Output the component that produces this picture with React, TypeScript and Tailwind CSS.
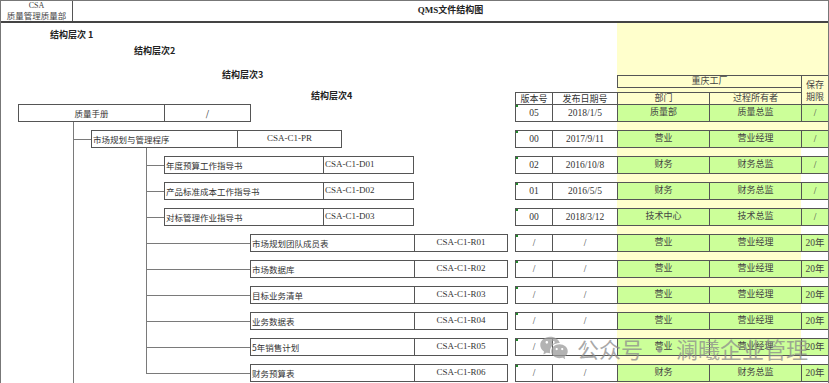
import React from "react";
import { RiWechatFill } from "react-icons/ri";

const serif = "font-['Liberation_Serif','Noto_Sans_CJK_SC',serif]";
const sans = "font-['Noto_Sans_CJK_SC','Liberation_Sans',sans-serif]";

type RowData = { ver: string; date: string; dept: string; owner: string; keep: string };

const rows: RowData[] = [
  { ver: "05", date: "2018/1/5", dept: "质量部", owner: "质量总监", keep: "/" },
  { ver: "00", date: "2017/9/11", dept: "营业", owner: "营业经理", keep: "/" },
  { ver: "02", date: "2016/10/8", dept: "财务", owner: "财务总监", keep: "/" },
  { ver: "01", date: "2016/5/5", dept: "财务", owner: "财务总监", keep: "/" },
  { ver: "00", date: "2018/3/12", dept: "技术中心", owner: "技术总监", keep: "/" },
  { ver: "/", date: "/", dept: "营业", owner: "营业经理", keep: "20年" },
  { ver: "/", date: "/", dept: "营业", owner: "营业经理", keep: "20年" },
  { ver: "/", date: "/", dept: "营业", owner: "营业经理", keep: "20年" },
  { ver: "/", date: "/", dept: "营业", owner: "营业经理", keep: "20年" },
  { ver: "/", date: "/", dept: "营业", owner: "营业经理", keep: "20年" },
  { ver: "/", date: "/", dept: "财务", owner: "财务总监", keep: "20年" },
];

const guides = [
  { name: "年度预算工作指导书", code: "CSA-C1-D01" },
  { name: "产品标准成本工作指导书", code: "CSA-C1-D02" },
  { name: "对标管理作业指导书", code: "CSA-C1-D03" },
];

const records = [
  { name: "市场规划团队成员表", code: "CSA-C1-R01" },
  { name: "市场数据库", code: "CSA-C1-R02" },
  { name: "目标业务清单", code: "CSA-C1-R03" },
  { name: "业务数据表", code: "CSA-C1-R04" },
  { name: "5年销售计划", code: "CSA-C1-R05" },
  { name: "财务预算表", code: "CSA-C1-R06" },
];

// tree connector: vertical line on the left, branch at the box's middle
function Elbow({ className, last }: { className: string; last?: boolean }) {
  return (
    <div className={`flex flex-col h-full ${className}`}>
      <div className="h-[9px] border-l border-[#7a7a7a]" />
      <div className="h-px bg-[#7a7a7a]" />
      {!last && <div className="flex-1 border-l border-[#7a7a7a]" />}
    </div>
  );
}

function Pass() {
  return <div className="w-[73px] h-full border-l border-[#7a7a7a]" />;
}

function TableCells({ d, first }: { d: RowData; first?: boolean }) {
  const cell = "h-[18px] border-y border-l border-[#555] flex items-center justify-center";
  return (
    <div className={`flex h-full text-[9.5px] text-[#333] ${serif}`}>
      <div className={`w-[37px] relative ${cell}`}>
        <span className="absolute left-0 top-0 w-[2px] h-[2px] bg-[#1f8a2a]" />
        {d.ver}
      </div>
      <div className={`w-[65px] ${cell}`}>{d.date}</div>
      <div className="w-[184px] h-full bg-[#ffffcc] flex items-start text-[9px]">
        <div className={`w-[92px] bg-[#ccff99] text-[#444] ${cell}`}>{d.dept}</div>
        <div className={`w-[92px] bg-[#ccff99] text-[#444] ${cell}`}>{d.owner}</div>
      </div>
      <div className={`w-[27px] h-full ${first ? "bg-[#ffffcc]" : "bg-white"}`}>
        <div className={`bg-[#ccff99] text-[#444] ${cell}`}>{d.keep}</div>
      </div>
    </div>
  );
}

export default function App() {
  return (
    <div className="relative w-[829px] h-[383px] overflow-hidden bg-white">
      <div className="w-[829px] h-[383px] border-l border-r border-[#777] flex flex-col">
        {/* title bar */}
        <div className={`flex h-[23px] border-t border-[#777] border-b-2 border-b-[#444] shrink-0 ${serif}`}>
          <div className="w-[72px] border-r border-[#555] flex flex-col items-center text-[8px] leading-[10px] text-[#444]">
            <span>CSA</span>
            <span className="text-[8.5px]">质量管理质量部</span>
          </div>
          <div className="flex-1 flex items-center justify-center text-[9px] font-bold text-[#222]">
            QMS文件结构图
          </div>
        </div>

        {/* level labels + column headers */}
        <div className="flex h-[81px] shrink-0">
          <div className={`w-[616px] flex flex-col text-[9px] font-bold leading-[12px] text-[#222] ${sans}`}>
            <div className="mt-[6px] pl-[49px]">结构层次 1</div>
            <div className="mt-[4px] pl-[133px]">结构层次2</div>
            <div className="mt-[12px] pl-[221px]">结构层次3</div>
            <div className="mt-auto flex h-[12px]">
              <div className="w-[514px] pl-[310px] -mt-[2px]">结构层次4</div>
              <div className={`w-[37px] border-t border-l border-[#555] flex items-center justify-center font-normal text-[9px] text-[#333] ${serif}`}>
                版本号
              </div>
              <div className={`w-[65px] border-t border-l border-[#555] flex items-center justify-center font-normal text-[9px] text-[#333] ${serif}`}>
                发布日期号
              </div>
            </div>
          </div>
          <div className={`w-[211px] bg-[#ffffcc] flex items-end text-[9px] text-[#444] ${serif}`}>
            <div className="w-[184px] flex flex-col">
              <div className="h-[13px] border-y border-l border-[#555] flex items-center justify-center">重庆工厂</div>
              <div className="h-[4px]" />
              <div className="h-[12px] border-t border-[#555] flex">
                <div className="w-[92px] border-l border-[#555] flex items-center justify-center">部门</div>
                <div className="w-[92px] border-l border-[#555] flex items-center justify-center">过程所有者</div>
              </div>
            </div>
            <div className="w-[27px] h-[29px] border-t border-l border-[#555] flex flex-col items-center justify-center leading-[12px] pt-[2px]">
              <span>保存</span>
              <span>期限</span>
            </div>
          </div>
        </div>

        {/* tree rows */}
        <div className="flex flex-col">
          {/* level 1 */}
          <div className="flex h-[26px] shrink-0">
            <div className="w-[514px] h-full flex">
              <div className="w-[17px]" />
              <div className="flex flex-col">
                <div className={`w-[233px] h-[18px] border border-[#555] flex text-[8.5px] text-[#333] ${sans}`}>
                  <div className="w-[146px] border-r border-[#555] flex items-center justify-center">质量手册</div>
                  <div className="flex-1 flex items-center justify-center">/</div>
                </div>
                <div className="ml-[55px] h-[8px] border-l border-[#7a7a7a]" />
              </div>
            </div>
            <TableCells d={rows[0]} first />
          </div>

          {/* level 2 */}
          <div className="flex h-[26px] shrink-0">
            <div className="w-[514px] h-full flex">
              <div className="w-[72px]" />
              <Elbow className="w-[18px]" />
              <div className="flex flex-col">
                <div className="w-[251px] h-[18px] border border-[#555] flex text-[8.5px] text-[#333]">
                  <div className={`w-[146px] border-r border-[#555] flex items-center pl-[1px] ${sans}`}>市场规划与管理程序</div>
                  <div className={`flex-1 flex items-center justify-center text-[9px] ${serif}`}>CSA-C1-PR</div>
                </div>
                <div className="ml-[55px] h-[8px] border-l border-[#7a7a7a]" />
              </div>
            </div>
            <TableCells d={rows[1]} />
          </div>

          {/* level 3 */}
          {guides.map((g, i) => (
            <div key={g.code} className="flex h-[26px] shrink-0">
              <div className="w-[514px] h-full flex">
                <div className="w-[72px]" />
                <Pass />
                <Elbow className="w-[18px]" />
                <div className="w-[250px] h-[18px] border border-[#555] flex text-[8.5px] text-[#333]">
                  <div className={`w-[159px] border-r border-[#555] flex items-center pl-[1px] ${sans}`}>{g.name}</div>
                  <div className={`flex-1 flex items-center pl-[1px] text-[9px] ${serif}`}>{g.code}</div>
                </div>
              </div>
              <TableCells d={rows[2 + i]} />
            </div>
          ))}

          {/* level 4 */}
          {records.map((r, i) => (
            <div key={r.code} className="flex h-[26px] shrink-0">
              <div className="w-[514px] h-full flex">
                <div className="w-[72px]" />
                <Pass />
                <Elbow className="w-[104px]" last={i === records.length - 1} />
                <div className="w-[258px] h-[18px] border border-[#555] flex text-[8.5px] text-[#333]">
                  <div className={`w-[164px] border-r border-[#555] flex items-center pl-[1px] ${sans}`}>{r.name}</div>
                  <div className={`flex-1 flex items-center justify-center text-[9px] ${serif}`}>{r.code}</div>
                </div>
              </div>
              <TableCells d={rows[5 + i]} />
            </div>
          ))}
        </div>
      </div>

      {/* watermark */}
      <div className={`absolute left-[539px] top-[333px] flex items-center text-[22px] leading-[30px] text-[#8c8c8c] opacity-75 ${sans}`}>
        <RiWechatFill className="w-[30px] h-[30px] text-[#9a9a9a]" />
        <span className="ml-[8px]">公众号</span>
        <span className="w-[33px] text-center">·</span>
        <span>澜曦企业管理</span>
      </div>
    </div>
  );
}
